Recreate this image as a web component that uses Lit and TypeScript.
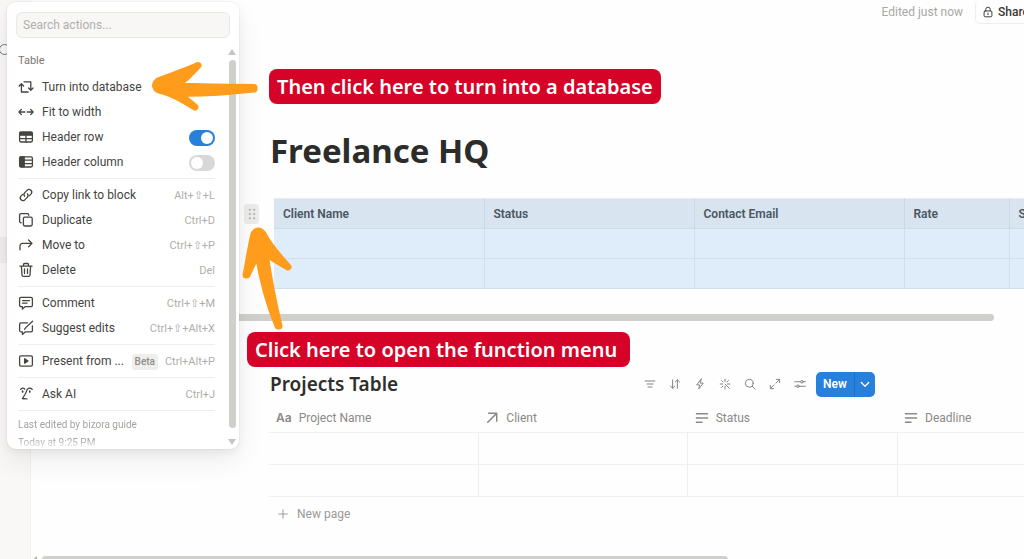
import { LitElement, html, css, svg, nothing, SVGTemplateResult } from "lit";
import { customElement } from "lit/decorators.js";

const paths: Record<string, SVGTemplateResult> = {
  turn: svg`<path d="M6 2.800H12.800V11M10.600 9l2.200 2.200L15 9M10.200 13H3.400V4.800M1.200 7l2.200-2.200L5.600 7"/>`,
  fit: svg`<path d="M1 8h5.800M9.2 8H15M3.4 5.4L.9 8l2.5 2.6M12.6 5.4L15.1 8l-2.500 2.600"/>`,
  row: svg`<rect x="1.6" y="3" width="12.8" height="10" rx="1.4"/><path d="M2 3.6h12v2.6H2z" fill="currentColor"/><path d="M1.6 9.6h12.8M8 6v7"/>`,
  column: svg`<rect x="1.6" y="2.8" width="12.8" height="10.2" rx="1.4"/><path d="M2.2 3h4v9.6h-4z" fill="currentColor"/><path d="M6.4 6.2h8M6.4 9.6h8"/>`,
  link: svg`<path d="M6.600 9.200a2.700 2.700 0 0 1 .2-3.600l2.500-2.500a2.700 2.700 0 0 1 3.800 3.800L11.400 8.600M9.400 6.800a2.700 2.700 0 0 1-.2 3.600l-2.500 2.500a2.700 2.700 0 0 1-3.800-3.800L4.600 7.400"/>`,
  copy: svg`<rect x="5.4" y="5.2" width="8.800" height="8.800" rx="1.4"/><path d="M3.300 10.800h-.2a1.500 1.500 0 0 1-1.500-1.500V3.100a1.500 1.500 0 0 1 1.500-1.500h6.200a1.500 1.500 0 0 1 1.500 1.500v.2"/>`,
  move: svg`<path d="M2 12.800V9a2.600 2.600 0 0 1 2.600-2.600H13.800M10.600 3l3.400 3.400-3.400 3.400"/>`,
  trash: svg`<path d="M2 4.200h12M5.500 4V2.500a1 1 0 0 1 1-1h3a1 1 0 0 1 1 1V4M3.400 4.400l.6 8.600a1.400 1.400 0 0 0 1.400 1.300h5.200a1.400 1.400 0 0 0 1.400-1.300l.6-8.600M6.500 6.800v4.800M9.500 6.800v4.800"/>`,
  comment: svg`<path d="M3 2.400h10a1.400 1.400 0 0 1 1.400 1.400v6.400a1.400 1.400 0 0 1-1.400 1.400H7.400L4.400 14v-2.400H3a1.400 1.400 0 0 1-1.400-1.400V3.800A1.400 1.400 0 0 1 3 2.400zM4.600 5.600h6.800M4.600 8.200h4.400"/>`,
  suggest: svg`<path d="M9.600 2.800H3a1.400 1.400 0 0 0-1.400 1.400v6.200A1.400 1.400 0 0 0 3 11.800h1.400v2.600l3-2.600H13a1.400 1.400 0 0 0 1.400-1.400V6M14.600 1.200L8 7.400 6.600 9.200"/>`,
  present: svg`<rect x="1.600" y="2.800" width="12.800" height="10.400" rx="1.400"/><path d="M6.600 5.800v4.400L10 8z" fill="currentColor"/>`,
  ai: svg`<path d="M2.600 3.400C4 1.800 5.600 2 6.800 3M9.200 3.400c1.600-1.600 3.600-1.600 5 0M9.200 3.600C8 7 6.800 9.200 4.400 12.600c1.600.4 3-.2 4.600.4"/><path d="M4.600 5.200v.8M11.800 5.200v.8" stroke-width="1.700"/>`,
  filter: svg`<path d="M1.400 4h13.200M3.800 8h8.400M5.400 12h5.200"/>`,
  sort: svg`<path d="M4.800 2.400v11.200M1.800 10.600L4.800 13.600l3-3M11.200 13.600V2.400M8.200 5.400L11.200 2.400l3 3"/>`,
  bolt: svg`<path d="M9.600 1.400L3.600 9.200h3.800l-1 5.400L12.400 6.800H8.600z"/>`,
  spark: svg`<path d="M8 1.600v3.200M1.600 8h3.200M11.200 8h3.200M8 11.200v3.200M3.400 3.400l2 2M12.600 3.400l-2 2M3.400 12.600l2-2M8.200 8.200l5.400 5.400"/>`,
  search: svg`<circle cx="7" cy="7" r="5.200"/><path d="M11 11L14.800 14.800"/>`,
  expand: svg`<path d="M9.200 6.800L14 2M9.800 1.800h4.400v4.400M6.800 9.200L2 14M1.800 9.800v4.400h4.400"/>`,
  sliders: svg`<path d="M1 5h7.800M12.400 5h2.800M1 11h2.600M7.200 11h8"/><circle cx="10.600" cy="5" r="1.700"/><circle cx="5.400" cy="11" r="1.700"/>`,
  chevron: svg`<path d="M3 6L8 11 13 6"/>`,
  lock: svg`<rect x="2.800" y="6.600" width="10.400" height="7.800" rx="1.400"/><path d="M5 6.400V4.600a3 3 0 0 1 6 0v1.800M8 9.600v2"/>`,
  arrow: svg`<path d="M2.600 13.400L13 3M3.600 2.600h9.800v9.800"/>`,
  text: svg`<path d="M1 3.200h14M1 8h14M1 12.800h7.600"/>`,
  plus: svg`<path d="M8 2.400v11.200M2.400 8h11.200"/>`,
};

const icon = (name: string) =>
  html`<svg class="icon" viewBox="0 0 16 16" aria-hidden="true">${paths[name]}</svg>`;

const shared = css`
  * { box-sizing: border-box; }
  .icon {
    width: 16px; height: 16px; flex: none; display: block;
    fill: none; stroke: currentColor; stroke-width: 1.3;
    stroke-linecap: round; stroke-linejoin: round;
  }
  button { font: inherit; color: inherit; border: 0; background: none; padding: 0; margin: 0; }
`;

interface Action { icon: string; label: string; keys?: string; toggle?: boolean; on?: boolean; beta?: boolean; }

const groups: Action[][] = [
  [
    { icon: "turn", label: "Turn into database" },
    { icon: "fit", label: "Fit to width" },
    { icon: "row", label: "Header row", toggle: true, on: true },
    { icon: "column", label: "Header column", toggle: true },
  ],
  [
    { icon: "link", label: "Copy link to block", keys: "Alt+⇧+L" },
    { icon: "copy", label: "Duplicate", keys: "Ctrl+D" },
    { icon: "move", label: "Move to", keys: "Ctrl+⇧+P" },
    { icon: "trash", label: "Delete", keys: "Del" },
  ],
  [
    { icon: "comment", label: "Comment", keys: "Ctrl+⇧+M" },
    { icon: "suggest", label: "Suggest edits", keys: "Ctrl+⇧+Alt+X" },
  ],
  [{ icon: "present", label: "Present from ...", keys: "Ctrl+Alt+P", beta: true }],
  [{ icon: "ai", label: "Ask AI", keys: "Ctrl+J" }],
];

@customElement("action-menu")
class ActionMenu extends LitElement {
  static styles = [shared, css`
    :host {
      display: block; width: 232px; padding: 10px 0 0 9px; overflow: hidden;
      background: #fff; border-radius: 9px; color: #454441;
      font: 12px/25px Roboto, sans-serif;
      box-shadow: 0 0 0 1px rgba(15,15,15,.03), 0 4px 10px rgba(15,15,15,.05), 0 12px 28px rgba(15,15,15,.07);
    }
    .search {
      display: block; width: 214px; height: 26px; padding: 0 6px; border: 1px solid #e9e8e6;
      border-radius: 6px; background: #f8f7f6; font: 12px Roboto, sans-serif; outline: none;
    }
    .search::placeholder { color: #b1afab; opacity: 1; }
    .body { display: flex; margin-top: 10px; }
    .list { flex: 1; padding: 0 10px 0 2px; min-width: 0; }
    .title { font-size: 11px; font-weight: 400; color: #787672; padding: 0 0 2px; margin: 0; }
    .group { padding-bottom: 3px; margin-bottom: 4px; border-bottom: 1px solid #efeeec; }
    .item { display: flex; align-items: center; width: 100%; height: 25px; text-align: left; }
    .item .icon { margin-bottom: 2px; }
    .label { flex: 1; margin-left: 8px; white-space: nowrap; }
    .keys { font-size: 11px; color: #b0aeaa; white-space: nowrap; }
    .beta { font-size: 10px; line-height: 16px; font-weight: 500; color: #8f8d89; background: #efeeec; border-radius: 3px; padding: 0 3px; margin-right: 7px; }
    .toggle {
      appearance: none; width: 26px; height: 16px; margin: 0; padding: 2px; border-radius: 8px;
      background: #d9d8d6; display: flex;
    }
    .toggle::before { content: ""; width: 12px; height: 12px; border-radius: 50%; background: #fff; }
    .toggle:checked { background: #2680dc; justify-content: flex-end; }
    .foot {
      margin: 0; padding-top: 1px; font-size: 10px; line-height: 18px; color: #a5a39f; height: 34px; overflow: hidden;
      -webkit-mask-image: linear-gradient(#000 24px, transparent); mask-image: linear-gradient(#000 24px, transparent);
    }
    .last { display: block; }
    .bar { width: 14px; display: flex; flex-direction: column; align-items: center; gap: 5px; padding: 1px 0 4px; }
    .up, .down { width: 0; height: 0; border: 4px solid transparent; }
    .up { border-top: 0; border-bottom: 6px solid #c6c5c2; }
    .down { border-bottom: 0; border-top: 6px solid #c6c5c2; margin-top: 6px; }
    .thumb { flex: 1; width: 7px; border-radius: 4px; background: #cfcfcb; }
  `];

  item(a: Action) {
    if (a.toggle) return html`<label class="item">${icon(a.icon)}<span class="label">${a.label}</span>
      <input class="toggle" type="checkbox" ?checked=${a.on}></label>`;
    return html`<button class="item" type="button">${icon(a.icon)}<span class="label">${a.label}</span>
      ${a.beta ? html`<span class="beta">Beta</span>` : nothing}
      ${a.keys ? html`<span class="keys">${a.keys}</span>` : nothing}</button>`;
  }

  render() {
    return html`
      <input class="search" type="text" placeholder="Search actions..." aria-label="Search actions">
      <div class="body">
        <div class="list">
          <h2 class="title">Table</h2>
          ${groups.map((g) => html`<div class="group">${g.map((a) => this.item(a))}</div>`)}
          <p class="foot">Last edited by bizora guide<span class="last">Today at 9:25 PM</span></p>
        </div>
        <div class="bar"><span class="up"></span><span class="thumb"></span><span class="down"></span></div>
      </div>`;
  }
}

@customElement("app-root")
class AppRoot extends LitElement {
  static styles = [shared, css`
    :host {
      display: flex; position: relative; height: 100vh; overflow: hidden; background: #fefefe;
      color: #2f2e2b; font: 12px/16px Roboto, sans-serif;
    }
    .side { width: 31px; flex: none; background: #f9f8f7; border-right: 1px solid #f1f0ee; }
    .search-peek { display: block; width: 11px; height: 11px; margin: 44px 0 0 -1px; border: 1px solid #777; border-radius: 50%; }
    .current { height: 26px; margin-top: 182px; background: #efeeec; }
    .page { flex: 1; min-width: 0; display: flex; flex-direction: column; overflow: hidden; }
    .top { display: flex; justify-content: flex-end; align-items: center; height: 23px; gap: 12px; margin-right: -14px; color: #aaa8a4; }
    .share {
      display: flex; align-items: center; gap: 4px; height: 24px; padding: 0 8px 0 6px;
      border: 1px solid #efeeec; border-top-color: transparent; border-radius: 5px; color: #3b3a37; font-weight: 500;
    }
    .share .icon { width: 12px; height: 12px; }
    .content { padding-left: 238px; }
    h1 { margin: 105px 0 0 1px; font: 700 33px/46px "Noto Sans", sans-serif; color: #2c2c2a; }
    .simple { display: flex; margin: 24px 0 0 -25px; align-items: flex-start; }
    .grip {
      width: 15px; height: 20px; margin-top: 6px; border-radius: 3px; background: #ececea; flex: none;
      display: flex; align-items: center; justify-content: center;
    }
    .grip svg { width: 8px; height: 12px; fill: #b0afac; display: block; }
    table { border-collapse: collapse; table-layout: fixed; }
    th { text-align: left; font-weight: 400; padding: 0; }
    .clients { margin-left: 15px; width: 945px; flex: none; border-top: 1px solid #e9edf0; }
    .clients th { height: 30px; padding-left: 9px; font-weight: 600; color: #4a5661; background: #d8e4ef; border-right: 1px solid #cbd9e5; border-bottom: 1px solid #cddbe7; }
    .clients td { height: 30px; background: #dfecf9; border-right: 1px solid #d0dfec; border-bottom: 1px solid #d0dfec; }
    .clients .w-col { width: 210px; }
    .w-col { width: 209px; }
    .clients .w-rate { width: 105px; }
    .hscroll { height: 7px; margin: 25px 30px 0 -50px; border-radius: 4px; background: #cfcfcb; }
    .db-head { display: flex; align-items: center; height: 26px; margin-top: 50px; }
    h2 { margin: 0 0 0 1px; width: 373px; font: 600 19px/26px "Noto Sans", sans-serif; }
    .tools { display: flex; gap: 11px; color: #85837f; }
    .tools .icon { width: 12px; height: 12px; }
    .tool { width: 14px; display: flex; justify-content: center; align-items: center; }
    .new { display: flex; height: 25px; margin-left: 9px; border-radius: 5px; overflow: hidden; background: #2680dc; color: #fff; font-weight: 600; }
    .new-main { width: 39px; border-right: 1px solid #1f6fc2; }
    .new-more { width: 20px; display: flex; align-items: center; justify-content: center; }
    .new-more .icon { width: 12px; height: 12px; stroke-width: 1.8; }
    .projects { width: 838px; color: #8b8985; }
    .projects th { height: 35px; padding: 8px 0 0 7px; border-bottom: 1px solid #f0efed; }
    .projects td { height: 32px; border-bottom: 1px solid #f0efed; border-right: 1px solid #f0efed; }
    .cell { display: flex; align-items: center; gap: 7px; }
    .cell .icon { width: 14px; height: 14px; stroke-width: 1.7; stroke-linecap: butt; }
    .aa { font: 600 12px/16px Inter, sans-serif; }
    .add { display: flex; align-items: center; gap: 8px; height: 34px; padding-left: 8px; color: #9b9995; }
    .add .icon { width: 12px; height: 12px; }
    .foot { display: flex; align-items: flex-start; gap: 5px; margin: auto 296px 0 1px; height: 3px; overflow: hidden; flex: none; }
    .foot-arrow { width: 0; height: 0; border: 4px solid transparent; border-left: 0; border-right: 5px solid #b5b5b1; }
    .foot-thumb { flex: 1; height: 7px; border-radius: 4px; background: #cfcfcb; }
    .menu { position: absolute; left: 7px; top: 2px; }
    .note {
      position: absolute; margin: 0; height: 35px; padding: 0 8px; border-radius: 8px; background: #d50327; color: #fff;
      font: 600 20px/35px "Noto Sans", sans-serif; white-space: nowrap;
    }
    .note-turn { left: 269px; top: 69px; }
    .note-open { left: 247px; top: 332px; padding-right: 13px; }
    .pointer { position: absolute; fill: #ff9c1b; stroke: #ff9c1b; stroke-linecap: round; stroke-linejoin: round; }
    .pointer-turn { left: 148px; top: 56px; width: 112px; height: 60px; }
    .pointer-open { left: 238px; top: 222px; width: 60px; height: 112px; }
  `];

  render() {
    const clients = ["Client Name", "Status", "Contact Email", "Rate", "Service"];
    const tools = [["filter", "Filter"], ["sort", "Sort"], ["bolt", "Automations"], ["spark", "AI autofill"], ["search", "Search"], ["expand", "Open full page"], ["sliders", "Settings"]];
    const fields = [["", "Project Name"], ["arrow", "Client"], ["text", "Status"], ["text", "Deadline"]];
    return html`
      <aside class="side"><span class="search-peek"></span><div class="current"></div></aside>
      <main class="page">
        <header class="top"><span>Edited just now</span>
          <button class="share" type="button">${icon("lock")}Share</button></header>
        <div class="content">
          <h1>Freelance HQ</h1>
          <div class="simple">
            <button class="grip" type="button" aria-label="Open block menu">
              <svg viewBox="0 0 8 14">${[2, 7, 12].map((y) => svg`<circle cx="1.500" cy=${y} r="1.200"/><circle cx="6.500" cy=${y} r="1.200"/>`)}</svg>
            </button>
            <table class="clients">
              <thead><tr>${clients.map((c) => html`<th class=${c === "Rate" ? "w-rate" : "w-col"} scope="col">${c}</th>`)}</tr></thead>
              <tbody>${[0, 1].map(() => html`<tr>${clients.map(() => html`<td></td>`)}</tr>`)}</tbody>
            </table>
          </div>
          <div class="hscroll"></div>
          <div class="db-head">
            <h2>Projects Table</h2>
            <div class="tools">${tools.map(([i, l]) => html`<button class="tool" type="button" aria-label=${l}>${icon(i)}</button>`)}</div>
            <div class="new"><button class="new-main" type="button">New</button>
              <button class="new-more" type="button" aria-label="More templates">${icon("chevron")}</button></div>
          </div>
          <table class="projects">
            <thead><tr>${fields.map(([i, f]) => html`<th class="w-col" scope="col"><span class="cell">${i ? icon(i) : html`<span class="aa" aria-hidden="true">Aa</span>`}${f}</span></th>`)}</tr></thead>
            <tbody>${[0, 1].map(() => html`<tr>${fields.map(() => html`<td></td>`)}</tr>`)}</tbody>
          </table>
          <button class="add" type="button">${icon("plus")}New page</button>
        </div>
        <div class="foot"><span class="foot-arrow"></span><span class="foot-thumb"></span></div>
      </main>
      <action-menu class="menu"></action-menu>
      <p class="note note-turn">Then click here to turn into a database</p>
      <p class="note note-open">Click here to open the function menu</p>
      <svg class="pointer pointer-turn" viewBox="0 0 112 60" aria-hidden="true">
        <path stroke-width="7" d="M50 9.500C38 15 24 20 10 25Q5 29.500 10 33.500C24 37 34 43 47 51Q38 43 28 37Q60 38 106 33V31.500Q60 31 28 30Q40 21 50 9.500Z"/>
      </svg>
      <svg class="pointer pointer-open" viewBox="0 0 60 112" aria-hidden="true">
        <path stroke-width="7" d="M8 53C11 38 13 24 16 12Q20 6 25 12C31 24 40 34 50 45Q38 38 27 31Q32 66 41 104H40Q26 70 20 31Q14 42 9 53Z"/>
      </svg>`;
  }
}
